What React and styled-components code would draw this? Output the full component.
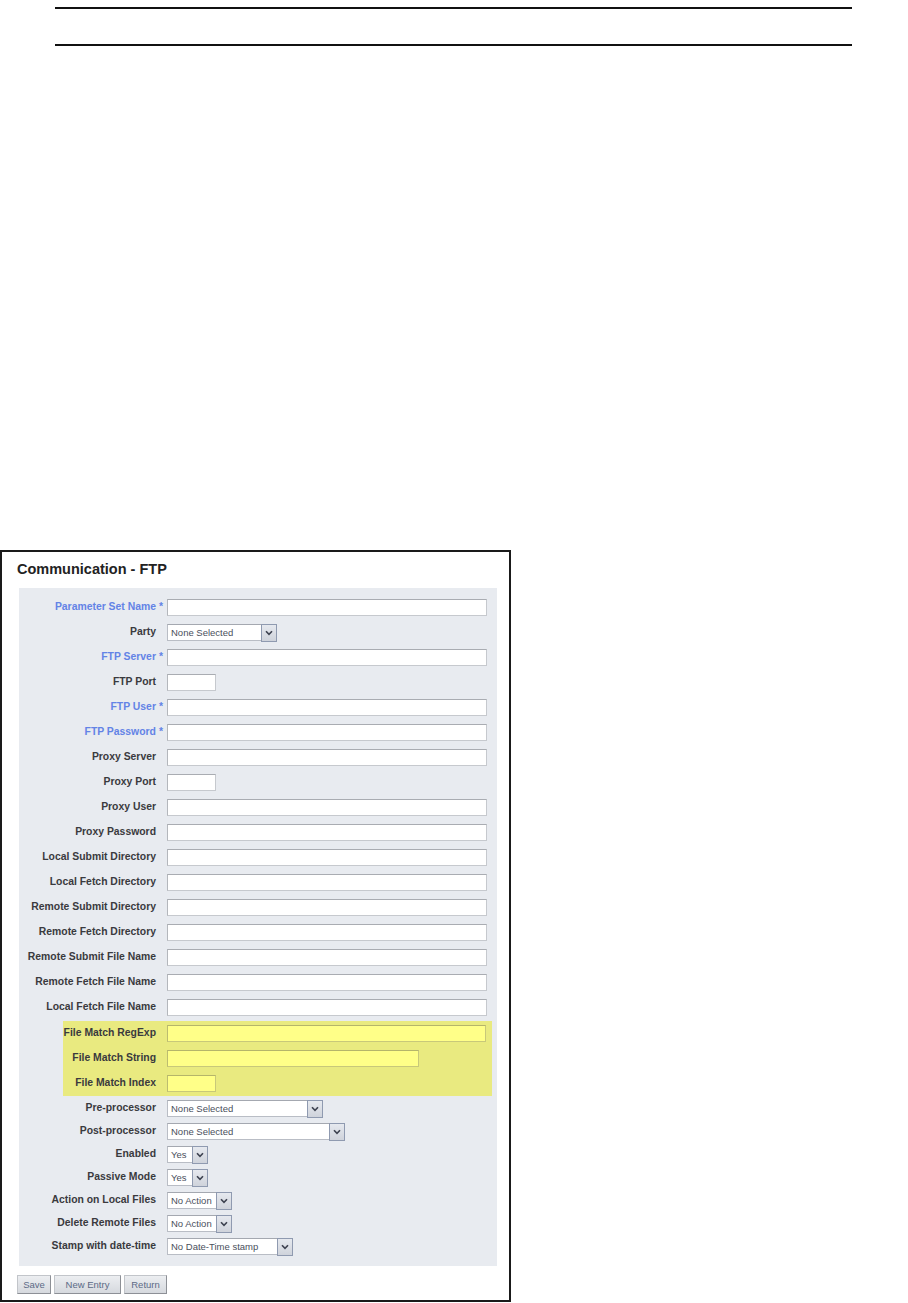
import React from "react";
import styled, { createGlobalStyle } from "styled-components";

const Global = createGlobalStyle`
  html, body { margin: 0; padding: 0; background: #fff; }
  body { font-family: "Liberation Sans", Arial, sans-serif; }
`;

const Page = styled.div`
  width: 908px;
  height: 1303px;
  overflow: hidden;
`;

const Rules = styled.div`
  margin: 7px 56px 0 55px;
  height: 35px;
  border-top: 2px solid #111;
  border-bottom: 2px solid #111;
`;

const Frame = styled.div`
  margin-top: 504px;
  width: 507px;
  height: 748px;
  border: 2px solid #1a1a1a;
  box-sizing: content-box;
  display: flex;
  flex-direction: column;
`;

const Title = styled.h1`
  margin: 9px 0 0 15px;
  font-size: 14.5px;
  line-height: 16px;
  font-weight: bold;
  color: #222;
`;

const Panel = styled.div`
  margin: 11px 0 0 17px;
  width: 478px;
  background: #e8ebf0;
  padding: 7px 0 8px;
  display: flex;
  flex-direction: column;
`;

const Highlight = styled.div`
  margin: 1px 5px 1px 44px;
  background: #e9ea80;
  display: flex;
  flex-direction: column;
`;

const Row = styled.div`
  display: grid;
  grid-template-columns: ${(p) => p.$labelWidth}px 1fr;
  column-gap: 11px;
  align-items: center;
  height: ${(p) => p.$h}px;
`;

const Label = styled.label`
  justify-self: end;
  font-size: 10.4px;
  font-weight: bold;
  color: ${(p) => (p.$req ? "#6383e6" : "#3a3a3e")};
  white-space: nowrap;
  line-height: 12px;
  margin-top: -2px;
`;

const Star = styled.span`
  margin-right: -7px;
  padding-left: 3px;
`;

const Field = styled.div`
  width: ${(p) => p.$w}px;
  height: 17px;
  box-sizing: border-box;
  background: ${(p) => (p.$yellow ? "#ffff88" : "#fff")};
  border: 1px solid ${(p) => (p.$yellow ? "#c8c87a" : "#c6c9ce")};
  border-top-color: ${(p) => (p.$yellow ? "#b5b56a" : "#a9acb2")};
  border-left-color: ${(p) => (p.$yellow ? "#bcbc70" : "#b4b7bc")};
`;

const Select = styled.div`
  width: ${(p) => p.$w}px;
  height: 17px;
  box-sizing: border-box;
  display: flex;
  align-items: stretch;
  background: #fff;
  border: 1px solid #b9bdc5;
  border-top-color: #a4a8b0;
`;

const SelectText = styled.span`
  flex: 1;
  font-size: 9.5px;
  line-height: 15px;
  padding-left: 3px;
  color: #4a4f5c;
  white-space: nowrap;
  overflow: hidden;
`;

const Arrow = styled.span`
  width: 14px;
  margin: -1px -1px -2px 0;
  background: linear-gradient(#e6e9ef, #cfd3db);
  border: 1px solid #8f9ab0;
  display: flex;
  align-items: center;
  justify-content: center;
`;

const Buttons = styled.div`
  display: flex;
  gap: 3px;
  margin: 9px 0 0 15px;
`;

const Button = styled.button`
  height: 19px;
  width: ${(p) => p.$w}px;
  padding: 0;
  font-family: "Liberation Sans", Arial, sans-serif;
  font-size: 9.5px;
  color: #5c6a86;
  background: linear-gradient(#eceef1, #d6d9de);
  border: 1px solid #c2c5ca;
  border-right-color: #8d9096;
  border-bottom-color: #8d9096;
`;

const Chevron = () => (
  <svg width="8" height="6" viewBox="0 0 8 6">
    <path d="M1 1.2 L4 4.4 L7 1.2" fill="none" stroke="#3d4250" strokeWidth="1.6" />
  </svg>
);

const mainRows = [
  { label: "Parameter Set Name", req: true, w: 320 },
  { label: "Party", sel: "None Selected", w: 110 },
  { label: "FTP Server", req: true, w: 320 },
  { label: "FTP Port", w: 49 },
  { label: "FTP User", req: true, w: 320 },
  { label: "FTP Password", req: true, w: 320 },
  { label: "Proxy Server", w: 320 },
  { label: "Proxy Port", w: 49 },
  { label: "Proxy User", w: 320 },
  { label: "Proxy Password", w: 320 },
  { label: "Local Submit Directory", w: 320 },
  { label: "Local Fetch Directory", w: 320 },
  { label: "Remote Submit Directory", w: 320 },
  { label: "Remote Fetch Directory", w: 320 },
  { label: "Remote Submit File Name", w: 320 },
  { label: "Remote Fetch File Name", w: 320 },
  { label: "Local Fetch File Name", w: 320 },
];

const yellowRows = [
  { label: "File Match RegExp", w: 319 },
  { label: "File Match String", w: 252 },
  { label: "File Match Index", w: 49 },
];

const selectRows = [
  { label: "Pre-processor", sel: "None Selected", w: 156 },
  { label: "Post-processor", sel: "None Selected", w: 178 },
  { label: "Enabled", sel: "Yes", w: 41 },
  { label: "Passive Mode", sel: "Yes", w: 41 },
  { label: "Action on Local Files", sel: "No Action", w: 65 },
  { label: "Delete Remote Files", sel: "No Action", w: 65 },
  { label: "Stamp with date-time", sel: "No Date-Time stamp", w: 126 },
];

function FormRow({ r, labelWidth, h, yellow }) {
  return (
    <Row $labelWidth={labelWidth} $h={h}>
      <Label $req={r.req}>
        {r.label}
        {r.req && <Star>*</Star>}
      </Label>
      {r.sel ? (
        <Select $w={r.w}>
          <SelectText>{r.sel}</SelectText>
          <Arrow>
            <Chevron />
          </Arrow>
        </Select>
      ) : (
        <Field $w={r.w} $yellow={yellow} />
      )}
    </Row>
  );
}

export default function App() {
  return (
    <Page>
      <Global />
      <Rules />
      <Frame>
        <Title>Communication - FTP</Title>
        <Panel>
          {mainRows.map((r) => (
            <FormRow key={r.label} r={r} labelWidth={137} h={25} />
          ))}
          <Highlight>
            {yellowRows.map((r) => (
              <FormRow key={r.label} r={r} labelWidth={93} h={25} yellow />
            ))}
          </Highlight>
          {selectRows.map((r) => (
            <FormRow key={r.label} r={r} labelWidth={137} h={23} />
          ))}
        </Panel>
        <Buttons>
          <Button $w={34}>Save</Button>
          <Button $w={67}>New Entry</Button>
          <Button $w={43}>Return</Button>
        </Buttons>
      </Frame>
    </Page>
  );
}
